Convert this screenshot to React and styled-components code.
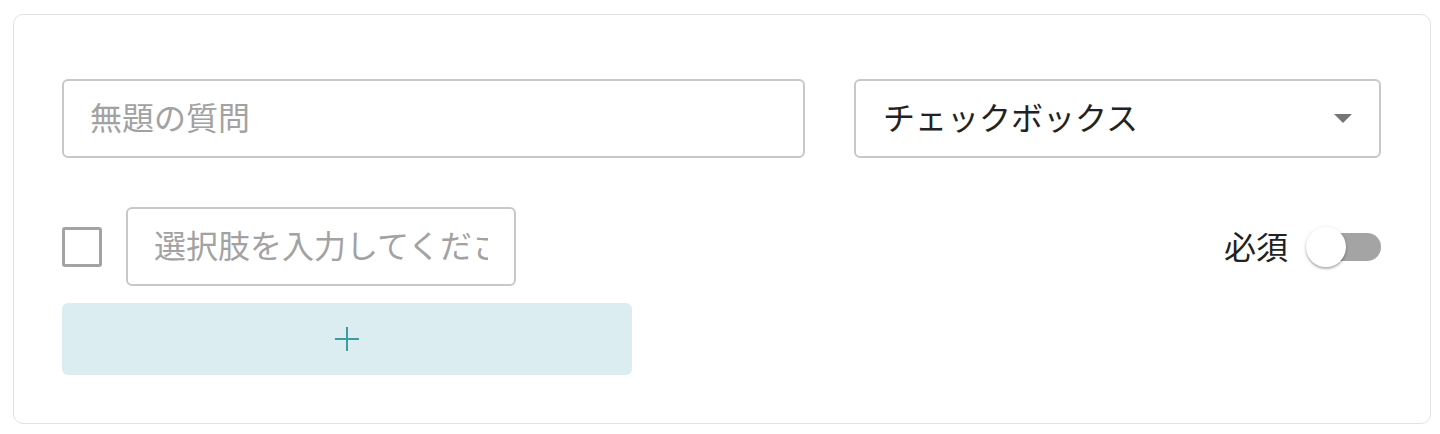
import React from 'react';
import styled, { createGlobalStyle } from 'styled-components';

const GlobalStyle = createGlobalStyle`
  html, body {
    margin: 0;
    padding: 0;
    background: #fff;
  }
  body {
    font-family: "Noto Sans CJK JP", "Noto Sans", sans-serif;
    color: #222;
  }
  * {
    box-sizing: border-box;
  }
`;

const Page = styled.div`
  padding: 14px 9px 10px 13px;
`;

const Card = styled.div`
  background: #fff;
  border: 1px solid #e2e2e6;
  border-radius: 10px;
  padding: 64px 49px 48px 48px;
  display: flex;
  flex-direction: column;
`;

const TopRow = styled.div`
  display: flex;
  gap: 49px;
`;

// outlined field; placeholder text is clipped at the content edge
const Field = styled.div`
  height: 79px;
  width: ${(p) => p.$width || 'auto'};
  flex: ${(p) => (p.$width ? '0 0 auto' : '1')};
  border: 2px solid #c8c8c8;
  border-radius: 6px;
  padding: 0 26px 5px 26px;
  display: flex;
  align-items: center;
  background: #fff;
`;

const Placeholder = styled.span`
  display: block;
  width: 100%;
  overflow: hidden;
  white-space: nowrap;
  font-size: 32px;
  line-height: 44px;
  color: #a2a2a2;
`;

const Select = styled.div`
  width: 527px;
  height: 79px;
  border: 2px solid #c8c8c8;
  border-radius: 6px;
  padding: 0 27px 5px 27px;
  display: flex;
  align-items: center;
  justify-content: space-between;
  font-size: 32px;
  line-height: 44px;
  color: #222;

  svg {
    margin-top: 5px;
  }
`;

const BottomRow = styled.div`
  margin-top: 49px;
  display: flex;
  justify-content: space-between;
  align-items: flex-start;
`;

const Options = styled.div`
  display: flex;
  flex-direction: column;
  gap: 17px;
`;

const OptionRow = styled.div`
  display: flex;
  align-items: center;
  gap: 24px;
`;

const Check = styled.span`
  width: 40px;
  height: 40px;
  border: 3.5px solid #a3a3a3;
  border-radius: 3px;
  flex: 0 0 auto;
`;

const AddButton = styled.button`
  width: 570px;
  height: 72px;
  border: none;
  border-radius: 6px;
  background: #dcedf1;
  display: flex;
  align-items: center;
  justify-content: center;
  padding: 0;
  cursor: pointer;
`;

const Required = styled.div`
  height: 79px;
  display: flex;
  align-items: center;
  gap: 18px;
  font-size: 32px;
  line-height: 44px;
  color: #222;

  & > span:first-child {
    margin-top: -3px;
  }
`;

const Switch = styled.span`
  position: relative;
  width: 75px;
  height: 40px;
  display: flex;
  align-items: center;
`;

const Track = styled.span`
  margin-left: 5px;
  width: 70px;
  height: 28px;
  border-radius: 14px;
  background: #a4a4a4;
`;

const Thumb = styled.span`
  position: absolute;
  left: 0;
  top: 0;
  width: 40px;
  height: 40px;
  border-radius: 50%;
  background: #fff;
  box-shadow: 0 2px 2px rgba(0, 0, 0, 0.22), 0 1px 4px rgba(0, 0, 0, 0.14);
`;

export default function App() {
  return (
    <Page>
      <GlobalStyle />
      <Card>
        <TopRow>
          <Field>
            <Placeholder>無題の質問</Placeholder>
          </Field>
          <Select>
            <span>チェックボックス</span>
            <svg width="18" height="9" viewBox="0 0 18 9">
              <path d="M0 0h18l-9 9z" fill="#757575" />
            </svg>
          </Select>
        </TopRow>
        <BottomRow>
          <Options>
            <OptionRow>
              <Check />
              <Field $width="390px">
                <Placeholder>選択肢を入力してください</Placeholder>
              </Field>
            </OptionRow>
            <AddButton>
              <svg width="24" height="24" viewBox="0 0 24 24">
                <path d="M12 0v24M0 12h24" stroke="#3a9d9f" strokeWidth="2" />
              </svg>
            </AddButton>
          </Options>
          <Required>
            <span>必須</span>
            <Switch>
              <Track />
              <Thumb />
            </Switch>
          </Required>
        </BottomRow>
      </Card>
    </Page>
  );
}
